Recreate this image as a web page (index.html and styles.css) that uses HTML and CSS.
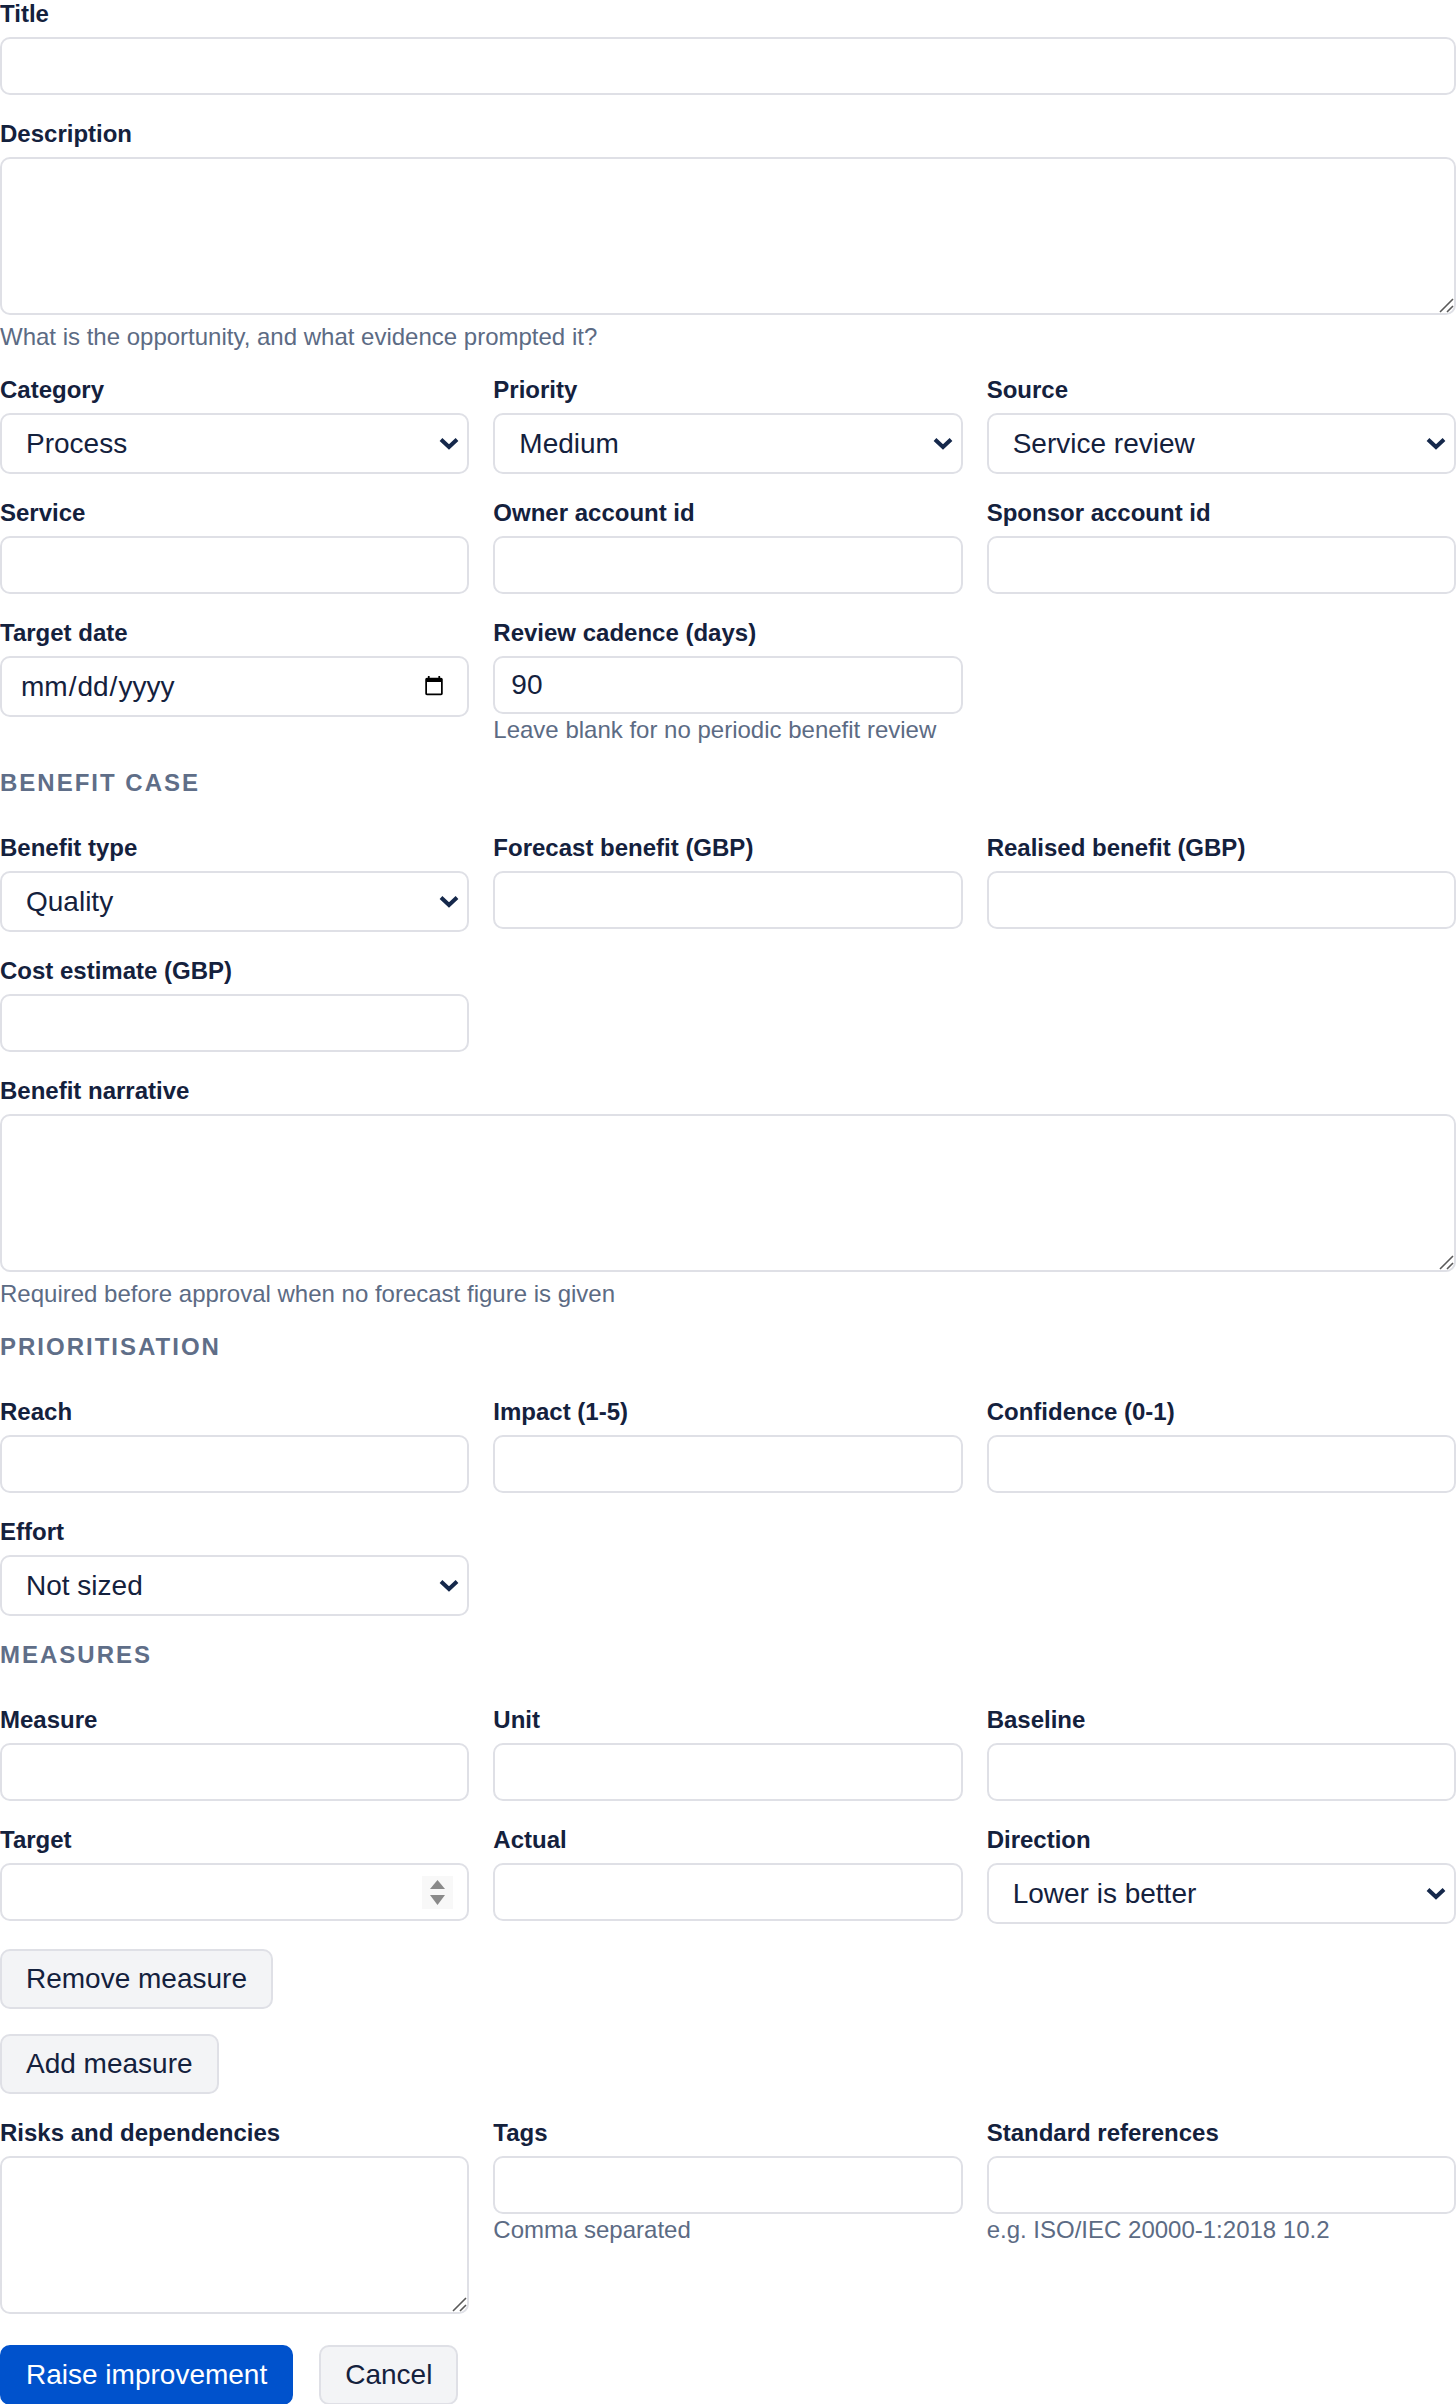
FILE: index.html
```html
<!DOCTYPE html>
<html lang="en">
<head>
  <meta charset="UTF-8">
  <meta name="viewport" content="width=device-width, initial-scale=1.0">
  <title>Raise improvement</title>
  <link rel="stylesheet" href="styles.css">
</head>
<body>
  <form class="improvement-form" onsubmit="return false">
    <div class="field">
      <label for="title">Title</label>
      <input id="title" type="text">
    </div>

    <div class="field">
      <label for="description">Description</label>
      <div class="area-wrap">
        <textarea id="description"></textarea>
        <svg class="grip" width="15" height="15" viewBox="0 0 15 15" aria-hidden="true"><path d="M1 14 L14 1 M8 14 L14 8" stroke="#5a5a5a" stroke-width="1.6"/></svg>
      </div>
      <p class="hint">What is the opportunity, and what evidence prompted it?</p>
    </div>

    <div class="row">
      <div class="field">
        <label for="category">Category</label>
        <select id="category">
          <option>Process</option>
          <option>Technology</option>
          <option>People</option>
        </select>
      </div>
      <div class="field">
        <label for="priority">Priority</label>
        <select id="priority">
          <option>Low</option>
          <option selected>Medium</option>
          <option>High</option>
        </select>
      </div>
      <div class="field">
        <label for="source">Source</label>
        <select id="source">
          <option>Service review</option>
          <option>Incident</option>
          <option>Audit</option>
        </select>
      </div>
    </div>

    <div class="row">
      <div class="field">
        <label for="service">Service</label>
        <input id="service" type="text">
      </div>
      <div class="field">
        <label for="owner">Owner account id</label>
        <input id="owner" type="text">
      </div>
      <div class="field">
        <label for="sponsor">Sponsor account id</label>
        <input id="sponsor" type="text">
      </div>
    </div>

    <div class="row">
      <div class="field">
        <label for="target-date">Target date</label>
        <input id="target-date" type="date" class="date">
      </div>
      <div class="field">
        <label for="cadence">Review cadence (days)</label>
        <input id="cadence" type="number" value="90">
        <p class="hint">Leave blank for no periodic benefit review</p>
      </div>
    </div>

    <h3 class="section">Benefit case</h3>

    <div class="row">
      <div class="field">
        <label for="benefit-type">Benefit type</label>
        <select id="benefit-type">
          <option>Quality</option>
          <option>Cost</option>
          <option>Risk</option>
        </select>
      </div>
      <div class="field">
        <label for="forecast">Forecast benefit (GBP)</label>
        <input id="forecast" type="number">
      </div>
      <div class="field">
        <label for="realised">Realised benefit (GBP)</label>
        <input id="realised" type="number">
      </div>
    </div>

    <div class="row">
      <div class="field">
        <label for="cost">Cost estimate (GBP)</label>
        <input id="cost" type="number">
      </div>
    </div>

    <div class="field">
      <label for="narrative">Benefit narrative</label>
      <div class="area-wrap">
        <textarea id="narrative"></textarea>
        <svg class="grip" width="15" height="15" viewBox="0 0 15 15" aria-hidden="true"><path d="M1 14 L14 1 M8 14 L14 8" stroke="#5a5a5a" stroke-width="1.6"/></svg>
      </div>
      <p class="hint">Required before approval when no forecast figure is given</p>
    </div>

    <h3 class="section">Prioritisation</h3>

    <div class="row">
      <div class="field">
        <label for="reach">Reach</label>
        <input id="reach" type="number">
      </div>
      <div class="field">
        <label for="impact">Impact (1-5)</label>
        <input id="impact" type="number">
      </div>
      <div class="field">
        <label for="confidence">Confidence (0-1)</label>
        <input id="confidence" type="number">
      </div>
    </div>

    <div class="row">
      <div class="field">
        <label for="effort">Effort</label>
        <select id="effort">
          <option>Not sized</option>
          <option>Small</option>
          <option>Medium</option>
          <option>Large</option>
        </select>
      </div>
    </div>

    <h3 class="section">Measures</h3>

    <div class="row">
      <div class="field">
        <label for="measure">Measure</label>
        <input id="measure" type="text">
      </div>
      <div class="field">
        <label for="unit">Unit</label>
        <input id="unit" type="text">
      </div>
      <div class="field">
        <label for="baseline">Baseline</label>
        <input id="baseline" type="number">
      </div>
    </div>

    <div class="row">
      <div class="field">
        <label for="measure-target">Target</label>
        <div class="number-wrap">
          <input id="measure-target" type="number">
          <svg class="spin" width="31" height="33" viewBox="0 0 31 33" aria-hidden="true">
            <rect width="31" height="33" fill="#f8f8f8"/>
            <path d="M8 13 L15.5 4 L23 13 Z" fill="#8a8a8a"/>
            <path d="M8 19 L23 19 L15.5 29 Z" fill="#8a8a8a"/>
          </svg>
        </div>
      </div>
      <div class="field">
        <label for="actual">Actual</label>
        <input id="actual" type="number">
      </div>
      <div class="field">
        <label for="direction">Direction</label>
        <select id="direction">
          <option>Lower is better</option>
          <option>Higher is better</option>
        </select>
      </div>
    </div>

    <div>
      <button type="button" class="btn">Remove measure</button>
    </div>

    <div>
      <button type="button" class="btn">Add measure</button>
    </div>

    <div class="row">
      <div class="field">
        <label for="risks">Risks and dependencies</label>
        <div class="area-wrap">
          <textarea id="risks"></textarea>
          <svg class="grip" width="15" height="15" viewBox="0 0 15 15" aria-hidden="true"><path d="M1 14 L14 1 M8 14 L14 8" stroke="#5a5a5a" stroke-width="1.6"/></svg>
        </div>
      </div>
      <div class="field">
        <label for="tags">Tags</label>
        <input id="tags" type="text">
        <p class="hint">Comma separated</p>
      </div>
      <div class="field">
        <label for="refs">Standard references</label>
        <input id="refs" type="text">
        <p class="hint">e.g. ISO/IEC 20000-1:2018 10.2</p>
      </div>
    </div>

    <div class="actions">
      <button type="submit" class="btn btn-primary">Raise improvement</button>
      <button type="button" class="btn">Cancel</button>
    </div>
  </form>
</body>
</html>
```

FILE: styles.css
```css
body {
  font-family: 'Liberation Sans', Arial, sans-serif;
  color: #14213d;
  background: #fff;
  margin: 0;
}
.improvement-form {
  display: flex;
  flex-direction: column;
  gap: 25px;
}
.row {
  display: grid;
  grid-template-columns: repeat(3, 1fr);
  column-gap: 24px;
  align-items: start;
}
.field {
  display: flex;
  flex-direction: column;
  min-width: 0;
}
label {
  font-size: 24px;
  line-height: 28px;
  font-weight: 700;
  margin-bottom: 9px;
}
input, select, textarea {
  font-family: inherit;
  font-size: 28px;
  color: #14213d;
  background: #fff;
  border: 2px solid #dfe0e6;
  border-radius: 10px;
  box-sizing: border-box;
  width: 100%;
  margin: 0;
  display: block;
}
input {
  height: 58px;
  padding: 0 16px;
}
input[type=number]::-webkit-inner-spin-button,
input[type=number]::-webkit-outer-spin-button {
  -webkit-appearance: none;
  margin: 0;
}
input.date {
  height: 61px;
  padding: 0 22px 0 18px;
}
input.date::-webkit-calendar-picker-indicator {
  width: 22px;
  height: 24px;
  margin: 0;
  padding: 0;
}
select {
  height: 61px;
  padding: 0 50px 0 24px;
  -webkit-appearance: none;
  appearance: none;
  background-image: url("data:image/svg+xml,%3Csvg xmlns='http://www.w3.org/2000/svg' width='20' height='13' viewBox='0 0 20 13'%3E%3Cpath d='M2 2.5 L10 10 L18 2.5' fill='none' stroke='%2315284b' stroke-width='4'/%3E%3C/svg%3E");
  background-repeat: no-repeat;
  background-position: right 8px center;
  background-size: 20px 13px;
}
.area-wrap {
  position: relative;
  margin-bottom: 6px;
}
textarea {
  height: 158px;
  padding: 12px 16px;
  resize: none;
}
.grip {
  position: absolute;
  right: 2px;
  bottom: 2px;
}
.hint {
  margin: 2px 0 0;
  font-size: 24px;
  line-height: 28px;
  color: #5c6b84;
}
.section {
  margin: 0 0 12px;
  font-size: 24px;
  line-height: 28px;
  font-weight: 700;
  text-transform: uppercase;
  letter-spacing: 2px;
  color: #5f6e88;
}
.number-wrap {
  position: relative;
}
.spin {
  position: absolute;
  right: 16px;
  top: 13px;
}
.btn {
  font-family: inherit;
  font-size: 28px;
  height: 60px;
  padding: 0 24px;
  border: 2px solid #dfe0e6;
  border-radius: 10px;
  background: #f3f4f6;
  color: #14213d;
  cursor: pointer;
}
.btn-primary {
  background: #0052cc;
  border-color: #0052cc;
  color: #fff;
}
.actions {
  display: flex;
  gap: 26px;
}
```
